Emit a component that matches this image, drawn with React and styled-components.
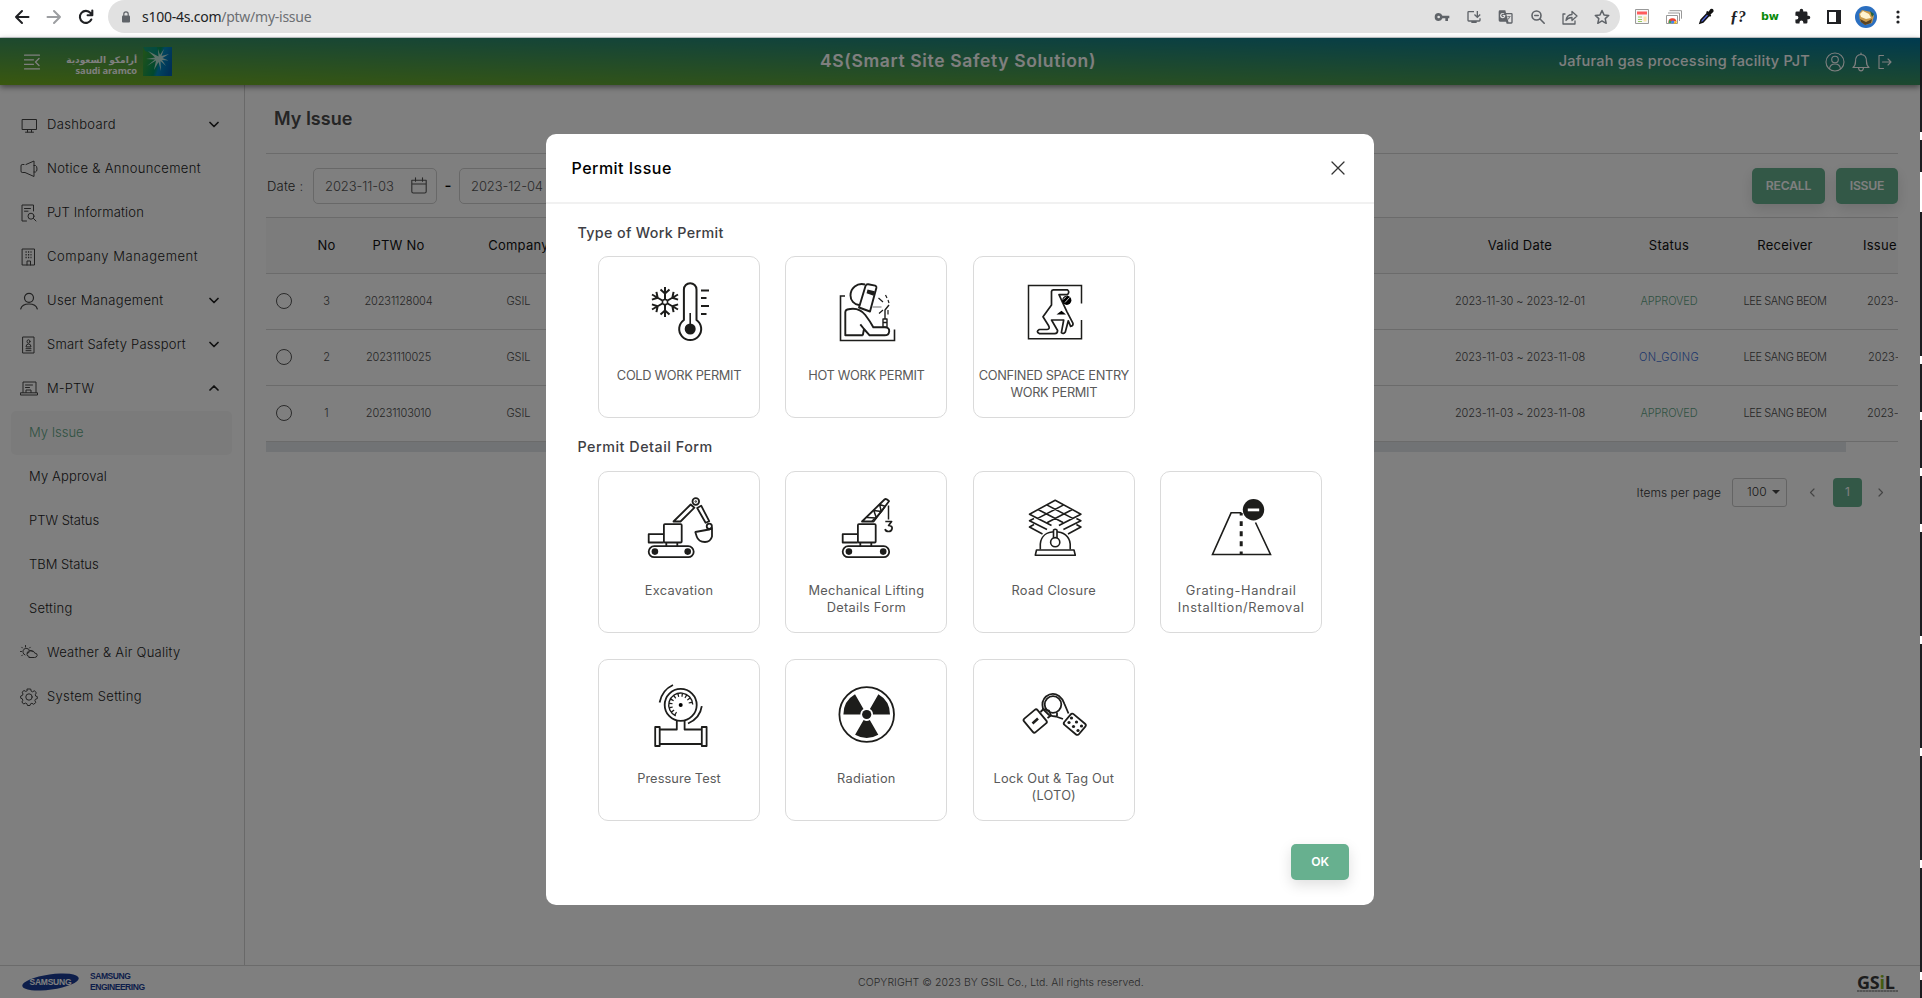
import React from "react";
import styled, { createGlobalStyle } from "styled-components";

const GlobalStyle = createGlobalStyle`
  * { box-sizing: border-box; }
  body { margin: 0; overflow: hidden; background: #fff; font-family: Inter, "Liberation Sans", sans-serif; }
  svg { display: block; flex: none; }
`;

const Screen = styled.div`
  display: flex;
  width: 1922px;
  height: 998px;
  overflow: hidden;
`;
const Browser = styled.div`
  width: 1920px;
  display: flex;
  flex-direction: column;
`;
const Edge = styled.div`
  width: 2px;
  background: linear-gradient(
    #fff 20px, #1c1c20 20px 132px, #fff 132px 140px, #1c1c20 140px 172px, #fff 172px 212px,
    #1c1c20 212px 356px, #fff 356px 364px, #1c1c20 364px 412px, #fff 412px 420px, #1c1c20 420px 468px,
    #fff 468px 476px, #1c1c20 476px 524px, #fff 524px 532px, #1c1c20 532px 636px, #fff 636px 644px,
    #1c1c20 644px 748px, #fff 748px 756px, #1c1c20 756px 860px, #fff 860px 868px, #1c1c20 868px 972px,
    #fff 972px 980px, #1c1c20 980px
  );
`;

/* ---------- browser toolbar ---------- */
const Toolbar = styled.div`
  height: 38px;
  display: flex;
  align-items: flex-start;
  background: #fff;
  border-bottom: 1px solid #c9cdd0;
`;
const NavIcons = styled.div`
  width: 108px;
  height: 33px;
  padding-left: 13px;
  display: flex;
  align-items: center;
  gap: 14px;
`;
const Omnibox = styled.div`
  width: 1512px;
  height: 33px;
  padding: 0 10px 0 14px;
  border-radius: 16.5px;
  background: #e1e1e1;
  display: flex;
  align-items: center;
`;
const Url = styled.div`
  flex: 1;
  margin-left: 12px;
  font: 14px/18px "Noto Sans", sans-serif;
  letter-spacing: -0.25px;
  color: #202124;
  span { color: #6c6f73; }
`;
const OmniIcons = styled.div`
  display: flex;
  gap: 16px;
`;
const Extensions = styled.div`
  height: 33px;
  padding-left: 14px;
  display: flex;
  align-items: center;
  gap: 16px;
`;
const ExtSlot = styled.div`
  width: 16px;
  height: 22px;
  display: flex;
  align-items: center;
  justify-content: center;
  font: ${(p) => p.$font || "inherit"};
  color: ${(p) => p.$color || "#202124"};
`;

/* ---------- app frame ---------- */
const Page = styled.div`
  position: relative;
  height: 960px;
  display: flex;
  flex-direction: column;
  background: #fff;
`;
const Header = styled.header`
  position: relative;
  height: 47px;
  padding: 0 28px 0 24px;
  display: grid;
  grid-template-columns: 1fr auto 1fr;
  align-items: center;
  background: linear-gradient(to top right, #74b01e, #00749e);
  box-shadow: 0 2px 6px rgba(0, 0, 0, 0.5);
  color: #fff;
`;
const HeaderLeft = styled.div`
  display: flex;
  align-items: center;
`;
const Aramco = styled.div`
  display: flex;
  align-items: center;
  gap: 6px;
  margin-left: 26px;
`;
const AramcoName = styled.div`
  width: 71px;
  padding-top: 6px;
  display: flex;
  flex-direction: column;
  align-items: flex-end;
  white-space: nowrap;
`;
const AramcoArabic = styled.span`
  font: bold 9px/11px "DejaVu Sans", sans-serif;
`;
const AramcoLatin = styled.span`
  font: bold 9.3px/9px "Open Sans", sans-serif;
  letter-spacing: -0.1px;
`;
const HeaderTitle = styled.div`
  padding-bottom: 2px;
  font-size: 17.5px;
  line-height: 20px;
  font-weight: 600;
  letter-spacing: 0.65px;
`;
const HeaderRight = styled.div`
  display: flex;
  align-items: center;
  justify-content: flex-end;
`;
const ProjectName = styled.div`
  padding-bottom: 1px;
  font-size: 14.5px;
  line-height: 20px;
  font-weight: 500;
  letter-spacing: 0.24px;
  margin-right: 15px;
  white-space: nowrap;
`;
const HeaderIcons = styled.div`
  display: flex;
  align-items: center;
  gap: 7px;
`;
const Body = styled.div`
  height: 880px;
  display: flex;
`;

/* ---------- sidebar ---------- */
const Sidebar = styled.nav`
  width: 245px;
  padding: 18px 12px 0 11px;
  border-right: 1px solid #d2d2d2;
`;
const MenuItem = styled.div`
  height: 44px;
  padding: ${(p) => (p.$sub ? "0 15px 2px 18px" : "0 13px 3px 9px")};
  display: flex;
  align-items: center;
  border-radius: 5px;
  background: ${(p) => (p.$active ? "#f7f7f7" : "transparent")};
  color: ${(p) => (p.$active ? "#5fa585" : "#1c1c1c")};
  font-size: 13px;
  font-weight: 300;
  letter-spacing: ${(p) => p.$ls || (p.$sub ? "0" : "0.33px")};
  white-space: nowrap;
`;
const MenuIcon = styled.span`
  width: 27px;
  padding-top: 3px;
`;
const MenuLabel = styled.span`
  flex: 1;
`;

/* ---------- main content ---------- */
const Main = styled.main`
  width: 1675px;
  padding: 0 22px 0 21px;
`;
const PageTitle = styled.h1`
  margin: 0;
  height: 68px;
  padding: 0 0 0 8px;
  font-size: 18px;
  line-height: 68px;
  font-weight: 600;
  letter-spacing: 0;
  color: #4b4b4b;
`;
const FilterBar = styled.div`
  height: 65px;
  border-top: 1px solid #d6d6d6;
  border-bottom: 1px solid #d6d6d6;
  display: flex;
  align-items: center;
`;
const FilterLabel = styled.span`
  width: 47px;
  padding-left: 1px;
  font-size: 13px;
  letter-spacing: 0.2px;
  color: #333;
  font-weight: 300;
`;
const DateField = styled.div`
  width: 124px;
  height: 36px;
  padding: 0 9px 0 11px;
  display: flex;
  align-items: center;
  justify-content: space-between;
  border: 1px solid #d0d0d0;
  border-radius: 5px;
  font-size: 13px;
  font-weight: 300;
  letter-spacing: -0.1px;
  color: #555;
`;
const Dash = styled.span`
  width: 22px;
  text-align: center;
  font-size: 15px;
  font-weight: 500;
`;
const Actions = styled.div`
  margin-left: auto;
  display: flex;
  gap: 11px;
`;
const Button = styled.button`
  width: ${(p) => p.$w}px;
  height: 36px;
  padding: 0;
  border: 0;
  border-radius: 5px;
  background: #67b08f;
  color: #fff;
  font: 600 12.2px/36px Inter, sans-serif;
  letter-spacing: -0.2px;
  box-shadow: 0 5px 14px rgba(0, 0, 0, 0.13);
`;
const TableWrap = styled.div`
  overflow: hidden;
`;
const Row = styled.div`
  height: 56px;
  padding-bottom: 1px;
  display: grid;
  grid-template-columns: 35px 51px 93px 147px 844px 168px 130px 102px 62px;
  align-items: center;
  border-bottom: 1px solid #d6d6d6;
  background: ${(p) => (p.$head ? "#f9f9f9" : "#fff")};
  font-size: ${(p) => (p.$head ? "13px" : "11px")};
  font-weight: ${(p) => (p.$head ? 400 : 300)};
  color: ${(p) => (p.$head ? "#111" : "#4c4c4c")};
  letter-spacing: ${(p) => (p.$head ? "0.25px" : "-0.06px")};
`;
const Cell = styled.div`
  text-align: ${(p) => p.$align || "center"};
  padding-left: ${(p) => p.$pad || 0}px;
  color: ${(p) => p.$color || "inherit"};
  letter-spacing: ${(p) => p.$ls || "inherit"};
  white-space: nowrap;
  justify-self: stretch;
`;
const Radio = styled.span`
  display: block;
  width: 16px;
  height: 16px;
  margin: 0 auto;
  border: 1.4px solid #555;
  border-radius: 50%;
`;
const ScrollThumb = styled.div`
  width: 1580px;
  height: 10px;
  background: #e3e6ea;
`;
const Pager = styled.div`
  height: 29px;
  margin-top: 26px;
  padding-right: 14px;
  display: flex;
  align-items: center;
  justify-content: flex-end;
  font-size: 12px;
  font-weight: 300;
  letter-spacing: 0.05px;
  color: #333;
`;
const PageSize = styled.div`
  width: 55px;
  height: 29px;
  margin: 0 22px 0 11px;
  padding: 0 6px 2px 14px;
  display: flex;
  align-items: center;
  justify-content: space-between;
  border: 1px solid #c9c9c9;
  border-radius: 3px;
`;
const CurrentPage = styled.div`
  width: 29px;
  height: 29px;
  margin: 0 16px 0 18px;
  border-radius: 4px;
  background: #67b08f;
  color: #fff;
  font-weight: 400;
  line-height: 27px;
  text-align: center;
`;

/* ---------- footer ---------- */
const Footer = styled.footer`
  height: 33px;
  border-top: 1px solid #d6d6d6;
  padding: 0 22px;
  display: flex;
  align-items: center;
`;
const Samsung = styled.div`
  width: 836px;
  display: flex;
  align-items: center;
  gap: 11px;
`;
const SamsungName = styled.div`
  font: bold 9.9px/10.6px "Liberation Sans", sans-serif;
  letter-spacing: -0.55px;
  transform: scaleX(0.865);
  transform-origin: left center;
  color: #1a3d96;
`;
const Copyright = styled.div`
  font-size: 10.5px;
  font-weight: 300;
  color: #555;
  letter-spacing: 0.05px;
`;
const Gsil = styled.div`
  margin-left: auto;
  width: 41px;
  font: bold 18px/18px "Open Sans", sans-serif;
  letter-spacing: -0.2px;
  color: #3a3a3a;
  white-space: nowrap;
  i { font-style: normal; color: #86b81e; }
  small {
    display: block;
    height: 2px;
    margin-top: -1px;
    background: repeating-linear-gradient(90deg, #aaa 0 2px, #ccc 2px 3px);
  }
`;

/* ---------- dialog ---------- */
const Overlay = styled.div`
  position: absolute;
  inset: 0;
  padding-top: 96px;
  display: flex;
  align-items: flex-start;
  justify-content: center;
  background: rgba(0, 0, 0, 0.5);
`;
const Dialog = styled.section`
  width: 828px;
  height: 771px;
  border-radius: 10px;
  background: #fff;
`;
const DialogHead = styled.div`
  height: 70px;
  padding: 0 29px 0 25.5px;
  display: flex;
  align-items: center;
  justify-content: space-between;
  border-bottom: 2px solid #f1f1f1;
  font-size: 16px;
  font-weight: 500;
  letter-spacing: 0.48px;
  color: #000;
`;
const Section = styled.div`
  padding: 0 0 0 52px;
`;
const SectionTitle = styled.h2`
  margin: 0 0 0 -20.5px;
  height: ${(p) => p.$h}px;
  padding-top: ${(p) => p.$top}px;
  font-size: 14.3px;
  line-height: 20px;
  font-weight: 500;
  letter-spacing: ${(p) => p.$ls};
  color: #3e3e44;
`;
const Cards = styled.div`
  display: grid;
  grid-template-columns: repeat(4, 162px);
  gap: 25.4px;
`;
const Card = styled.div`
  height: 162px;
  padding-top: 19px;
  display: flex;
  flex-direction: column;
  align-items: center;
  border: 1px solid #dadada;
  border-radius: 10px;
  background: #fff;
`;
const CardLabel = styled.div`
  margin: 19px -8px 0;
  font-size: 12.8px;
  line-height: 17px;
  letter-spacing: ${(p) => p.$ls || "0.3px"};
  color: #5a5a5a;
  text-align: center;
  white-space: pre;
`;
const DialogFoot = styled.div`
  padding: 23px 25px 0 0;
  display: flex;
  justify-content: flex-end;
`;

/* ---------- drawings ---------- */
const Line = ({ size = 18, w = size, h = size, sw = 1, children, color = "currentColor" }) => (
  <svg width={w} height={h} viewBox={`0 0 ${w} ${h}`} fill="none" stroke={color} strokeWidth={sw} strokeLinecap="round" strokeLinejoin="round">
    {children}
  </svg>
);
const Chevron = ({ d, w = 10, h = 8, sw = 1.7, color = "#222" }) => (
  <Line w={w} h={h} sw={sw} color={color}><path d={d} /></Line>
);
const Mat = ({ d, color = "#5f6368", size = 16 }) => (
  <svg width={size} height={size} viewBox="0 0 24 24" fill={color}><path d={d} /></svg>
);

const menuIcons = {
  dashboard: <path d="M2.500 3.500h14v10h-14zM7.500 13.500v2.500M11.500 13.500v2.500M5.500 16.200h8" />,
  notice: <path d="M4 4.500H2.200Q1 4.500 1 6v5q0 1.500 1.200 1.500H5l9 4V1L6 4.500M14 5.500h1.500Q17 6 17 9q0 2.500-1.500 3H14" />,
  info: <path d="M6.500 17H2V1h11.500v6M4.500 4.500h6M4.500 7.200h3.500M16 17l-2.500-2.500M14 12.200a3 3 0 1 1-6 0 3 3 0 0 1 6 0z" />,
  company: <><path d="M2.500 1h12v16h-12zM7 17v-4h3.500v4" /><path d="M5.500 4h6M5.500 6.700h6M5.500 9.400h6" strokeDasharray="1.200 1.300" strokeWidth="1.500" strokeLinecap="butt" /></>,
  user: <path d="M13.500 5.800a4.500 4.500 0 1 1-9 0 4.500 4.500 0 0 1 9 0zM.7 17q1.300-5 8.300-5t8.300 5" strokeWidth="1.200" />,
  passport: <path d="M3 1h11v16H3zM10 5.500a1.500 1.700 0 1 1-3 0 1.500 1.700 0 0 1 3 0zM6 10.500q0-2.500 2.500-2.500T11 10.500zM6 12.700h5M6 14.700h5" />,
  ptw: <path d="M3 12.500V2h13v10.500M.8 12.800h16.700v2.200H.8zM5.500 5h7M5.500 7.500h4M6 12.500V10h5v2.500" />,
  weather: <path d="M5.500 3V1.500M1.500 7.500H.5M2.500 4l-.8-.8M9.500 4l.8-.8M2.500 11l-.8.8M5 11a3.500 3.500 0 1 1 4.500-4.800M7 9q2-4.500 5.500-1.500M9 12.500q-2 0-2-2t2-2q1-3 4-1.500 1.500.8 1.500 2 3 .2 2.700 2.500-.5 2-2.700 2H9" />,
  setting: <><path d="M7.300 1h3.400l.5 2.200 1.300.6 2-1.100 1.800 2.200-1 1.800.4 1.400 1.600.5v2l-1.900.7-.5 1.300.9 1.900-2.100 1.800-1.800-1-1.300.5-.6 1.700H7.500l-.6-1.800-1.400-.6-1.900.9-1.700-2 .9-1.700-.5-1.500-1.600-.6V8l1.800-.7.5-1.300-.9-1.800 1.900-1.700 1.700.9 1.200-.5z" /><circle cx="9" cy="9" r="3.200" /></>,
};

const INK = "#1d1d1b";
const Art = ({ children, sw = 1.8 }) => (
  <svg width="72" height="72" viewBox="0 0 72 72" fill="none" stroke={INK} strokeWidth={sw} strokeLinejoin="round">{children}</svg>
);

const SnowArm = ({ a }) => (
  <path transform={`rotate(${a} 22 26)`} d="M22 23V11M17.500 13.500l4.500 4 4.500-4" />
);
const ColdArt = () => (
  <Art sw={2}>
    {[0, 60, 120, 180, 240, 300].map((a) => <SnowArm key={a} a={a} />)}
    <circle cx="22" cy="26" r="2.600" strokeWidth="1.500" />
    <path d="M40.900 44V13.500a6.300 6.300 0 0 1 12.600 0V44a11 11 0 1 1-12.600 0z" />
    <circle cx="47.200" cy="53" r="5.500" fill={INK} stroke="none" />
    <path d="M47.200 37v14" strokeWidth="1.600" />
    <path d="M58 14.500h8M58 22h5.500M58 30h8M58 38h5.500" />
  </Art>
);
const HotArt = () => (
  <Art sw={1.900}>
    <path d="M15 20h-4.500v44.500H64.500V53.500" strokeWidth="1.600" strokeLinejoin="miter" />
    <path d="M35 8.500C27 6.500 20.500 12 20.500 19.500c0 5 3.500 9 8.500 9.500" />
    <path d="M38.200 8.300l7 1.300q1.500.6 1.200 2.200L40 35.500l-11-4L35.500 10q.8-2 2.700-1.700z" />
    <path d="M37.500 13.500l7.300 1.800-1.200 4.500-7-2.500z" fill={INK} stroke="none" />
    <path d="M32.800 59.300H15.300V36q0-1.800 2-2.500 11.500-3 18 5.500 5 6.500 8 12.300H55q4.500.2 4.200 4-.5 4-4.500 4H39.600L34 53l-3.700-4.700M34 53l-1.200 6.300" />
    <path d="M53 43h4v8.300h-4zM53 46.500h4M55 43v-9l4-5" strokeWidth="1.400" />
    <path d="M48.500 22l4.500 4M55.500 19l1.500 3M58 24l1 3M49 37.500l4-3.500M58 34v4.500" strokeWidth="1.200" />
    <path d="M42.500 31h9" stroke="#888" strokeWidth="1.200" />
  </Art>
);
const ConfinedArt = () => (
  <Art sw={1.700}>
    <path d="M63.500 27.500V9.500H10.500v53.200h53V44" strokeWidth="1.500" strokeLinejoin="miter" />
    <path d="M49.500 18.600H41l4 8.700 4 8.500 6 11.500q.3 2.700-2.400 3l-2.300-5.500-3 11.200q-1.800 2.500-3.900.7L45.700 44H33.500l6.100 10.500q0 3-3 3.200H21.600q-4.300-2-.3-4.200H29q3.500-.5 1.500-4L25 40.700 33.500 29V15.500q.3-1.700 2-1.700h14q2.500 2.200 0 4.800z" />
    <circle cx="48.800" cy="24.300" r="4.600" fill="#000" stroke="none" />
    <path d="M47 26.500l4.500-5M45.200 23.500l3-3" stroke="#fff" strokeWidth=".8" />
    <path d="M38.500 38.500l5-3.800 4.500 3.800z" fill="#000" stroke="none" />
  </Art>
);
const Vehicle = ({ x = 0, w = 45 }) => (
  <g transform={`translate(${x} 0)`}>
    <rect x="5.700" y="55.200" width={w} height="11" rx="5.500" />
    <circle cx="11.900" cy="60.600" r="3.300" fill={INK} stroke="none" />
    <circle cx={w - 0.3} cy="60.600" r="3.300" fill={INK} stroke="none" />
    <path d="M23.300 51.500v3.500M34.300 51.500v3.500M20.700 43.200h-15v8.300h15" />
    <rect x="20.900" y="33.200" width="17.800" height="18.300" rx="1" />
  </g>
);
const ExcavationArt = () => (
  <Art>
    <Vehicle />
    <path d="M30.500 30.500L47.700 13.500l3.700 3.200L37.500 30.500z" />
    <circle cx="52.800" cy="10.500" r="3.300" /><circle cx="52.800" cy="10.500" r=".8" strokeWidth="1" />
    <path d="M54.200 17l4-2.300 8 15.500-3.600 1.600z" />
    <circle cx="66.300" cy="35.200" r="2.600" />
    <path d="M52.300 41l11-2q3 0 5.700-2v8.500q-1.500 5.500-7 5.500-6.500 0-8.300-5.500z" />
  </Art>
);
const LiftingArt = () => (
  <Art>
    <Vehicle x={7} w={46.5} />
    <path d="M32 30.500L54.500 8.500q1.800-1.500 4.500 1.700L43.600 30.500z" />
    <path d="M36.900 26.500l9.500.5-2.600-7.500 7.500 1-1.700-7 5.400 1.700M42 30l4-3.500 5.500-6 3.500-5" strokeWidth="1.500" />
    <path d="M58.500 14.500v14" strokeWidth="1.500" />
    <path d="M55.300 30.500h6.300l-3 4q4 .5 3.500 3-.5 3-3.500 3t-3.500-2.500" strokeWidth="1.700" />
  </Art>
);
const RoadArt = () => (
  <Art sw={1.600}>
    <path d="M33.500 34.500L11.500 23.200 37.200 9.200l25.700 14-22 11.300M20 18.500l25 13M28.700 13.900l26 13.500M54.400 18.500l-25 13M45.700 13.900l-26 13.500" />
    <path d="M16 27.500l-4.500 2.200L29 38.500M58.400 27.500l4.500 2.200-17.500 8.800M16 33.500l-4.500 2.500L24.500 43M58.400 33.500l4.500 2.500L50 43" />
    <path d="M22.300 58.500V53C23 45 29 40.800 37.200 40.800S51.500 45 52.200 53v5.500" fill="#fff" />
    <path d="M18.500 59h37.500l1.300 5.200H17.300z" />
    <path d="M35.500 47v-8q1.700-1.500 3.500 0v8" fill="#fff" />
    <circle cx="37.200" cy="51.200" r="4.600" fill="#fff" />
  </Art>
);
const GratingArt = () => (
  <Art>
    <path d="M36.500 21.800H26.100L7.500 63.500h58L50.500 31.500" strokeWidth="1.600" strokeLinejoin="miter" />
    <path d="M36.200 22v2.500M36.200 30.200v4.800M36.200 40.200v5M36.200 50.200v5M36.200 60.500v3" strokeWidth="3" />
    <circle cx="48.500" cy="18.800" r="10.700" fill={INK} stroke="none" />
    <path d="M42.800 18.900h11.400" stroke="#fff" strokeWidth="2.800" />
  </Art>
);
const PressureArt = () => (
  <Art sw={1.800}>
    <circle cx="37.700" cy="25.900" r="16" />
    <path d="M32.700 36.900A12 12 0 1 1 49.700 25.500" strokeWidth="1.400" />
    <path d="M33.200 34.900A10 10 0 1 1 47.700 25.500" strokeWidth="3.500" strokeDasharray="1.300 2.600" />
    <circle cx="37.700" cy="25.900" r="2" fill="#000" stroke="none" />
    <path d="M30 6Q19 11 16.600 23.500M58.800 27.200Q57 39.500 45 44.500" />
    <path d="M33.800 42v8.500H17M41.600 42v8.500h17M17 65h41.800M12.200 48h4.500v19h-4.500zM58.800 48h4.800v19h-4.800z" />
  </Art>
);
const RadiationArt = () => (
  <Art>
    <circle cx="36.700" cy="35.500" r="27.300" />
    <circle cx="36.700" cy="35.500" r="4.600" fill={INK} stroke="none" />
    {[0, 120, 240].map((a) => (
      <path key={a} transform={`rotate(${a} 36.700 35.500)`} d="M33.600 41l-8.500 14.700a23.300 23.300 0 0 0 23.200 0L39.800 41a6.300 6.300 0 0 1-6.200 0z" fill={INK} stroke="none" />
    ))}
  </Art>
);
const LotoArt = () => (
  <Art sw={1.800}>
    <circle cx="35" cy="25.500" r="8.300" />
    <path d="M25 30q-2-8 3-12.500 6.500-5 13-.5 4 3 5.500 8l4 9.500M25 30l6 6q4 1.500 7 1.500l7 2.500M39 33.500V37" />
    <path d="M22.500 33l3-3 5.500 1.500 2 5-3.500 2.500" />
    <rect x="-8.800" y="-8.800" width="17.600" height="17.600" rx="2" transform="translate(17.200 42) rotate(-40)" fill="#fff" />
    <path d="M14.500 44.500l5.500-5" strokeWidth="2.600" />
    <rect x="-9.500" y="-7" width="19" height="14" rx="2" transform="translate(56.800 45.300) rotate(40)" fill="#fff" />
    {[[53.5, 39], [51, 43.5], [58.5, 43], [55.5, 47.5], [63.5, 47], [60, 51.5]].map(([x, y]) => <circle key={`${x}-${y}`} cx={x} cy={y} r="1.600" fill={INK} stroke="none" />)}
  </Art>
);

/* ---------- data ---------- */
const menu = [
  { label: "Dashboard", icon: "dashboard", arrow: "down" },
  { label: "Notice & Announcement", icon: "notice" },
  { label: "PJT Information", icon: "info", ls: "0.15px" },
  { label: "Company Management", icon: "company", ls: "0.55px" },
  { label: "User Management", icon: "user", arrow: "down" },
  { label: "Smart Safety Passport", icon: "passport", arrow: "down", ls: "0.22px" },
  { label: "M-PTW", icon: "ptw", arrow: "up", ls: "0.1px" },
  { label: "My Issue", sub: true, active: true },
  { label: "My Approval", sub: true, ls: "0.15px" },
  { label: "PTW Status", sub: true },
  { label: "TBM Status", sub: true },
  { label: "Setting", sub: true, ls: "0.25px" },
  { label: "Weather & Air Quality", icon: "weather", ls: "0.25px" },
  { label: "System Setting", icon: "setting" },
];
const rows = [
  { no: 3, ptw: "20231128004", valid: "2023-11-30 ~ 2023-12-01", status: "APPROVED" },
  { no: 2, ptw: "20231110025", valid: "2023-11-03 ~ 2023-11-08", status: "ON_GOING" },
  { no: 1, ptw: "20231103010", valid: "2023-11-03 ~ 2023-11-08", status: "APPROVED" },
];
const permits = [
  ["COLD WORK PERMIT", ColdArt],
  ["HOT WORK PERMIT", HotArt],
  ["CONFINED SPACE ENTRY\nWORK PERMIT", ConfinedArt],
];
const forms = [
  ["Excavation", ExcavationArt],
  ["Mechanical Lifting\nDetails Form", LiftingArt],
  ["Road Closure", RoadArt],
  ["Grating-Handrail\nInstalltion/Removal", GratingArt, "0.65px"],
  ["Pressure Test", PressureArt, "0.08px"],
  ["Radiation", RadiationArt],
  ["Lock Out & Tag Out\n(LOTO)", LotoArt, "0.18px"],
];

const CardGrid = ({ items, ls }) => (
  <Cards>
    {items.map(([label, Drawing, own]) => (
      <Card key={label}>
        <Drawing />
        <CardLabel $ls={own || ls}>{label}</CardLabel>
      </Card>
    ))}
  </Cards>
);

const Calendar = () => (
  <Line w={16} h={17} sw={1.1} color="#555"><path d="M.8 3.200h14.400v11.300q0 1.500-1.500 1.500H2.300Q.8 16 .8 14.500zM.8 7h14.400M4.500.8v3.500M11.500.8v3.500" /></Line>
);

export default function App() {
  return (
    <Screen>
      <GlobalStyle />
      <Browser>
        <Toolbar>
          <NavIcons>
            <Line w={18} h={18} sw={2} color="#202124"><path d="M15.500 9H3M9 3L3 9l6 6" /></Line>
            <Line w={18} h={18} sw={2} color="#9c9ea1"><path d="M2.500 9H15M9 3l6 6-6 6" /></Line>
            <Line w={18} h={18} sw={2.1} color="#202124"><path d="M14.300 11.500A6 6 0 1 1 13.500 5L15 6.500M15.300 2.500v4.700h-4.700" /></Line>
          </NavIcons>
          <Omnibox>
            <svg width="8" height="12" viewBox="0 0 8 12"><rect y="4.500" width="8" height="7" rx="1" fill="#5f6368" /><path d="M1.800 5V3a2.200 2.200 0 0 1 4.400 0v2" fill="none" stroke="#5f6368" strokeWidth="1.200" /></svg>
            <Url>s100-4s.com<span>/ptw/my-issue</span></Url>
            <OmniIcons>
              <Mat d="M12.650 10A6 6 0 0 0 7 6a6 6 0 0 0 0 12 6 6 0 0 0 5.650-4H17v4h4v-4h2v-4H12.650zM7 14a2 2 0 1 1 0-4 2 2 0 0 1 0 4z" />
              <Mat d="M20 17H4V5h8V3H4a2 2 0 0 0-2 2v12a2 2 0 0 0 2 2h4v2h8v-2h4a2 2 0 0 0 2-2v-3h-2v3zM17 14l5-5-1.400-1.400L18 10.200V3h-2v7.200l-2.600-2.600L12 9l5 5z" />
              <Mat d="M3 2h8l1 4h8a2 2 0 0 1 2 2v12a2 2 0 0 1-2 2h-7l-1-3H3a2 2 0 0 1-2-2V4a2 2 0 0 1 2-2zm4 12c2.500 0 4-1.800 4-4.200V9H7v1.500h2.200A2.200 2.200 0 1 1 8.600 8l1.100-1A4 4 0 1 0 7 14zm5.500-6l3.300 12H20V8h-7.500zM14 11h5v1h-1l-2 4-.8-1.500 1.300-2.500H14z" />
              <Line w={16} h={16} sw={1.6} color="#5f6368"><path d="M11 6.500a4.500 4.500 0 1 1-9 0 4.500 4.500 0 0 1 9 0zM9.800 9.800l4.400 4.400M4.800 6.500h3.400" /></Line>
              <Line w={16} h={16} sw={1.3} color="#5f6368"><path d="M3 5H1v10h12v-3M4 11.500Q4.500 6 10 5.500V2.500L15 7l-5 4.500v-3Q6 8.500 4 11.500z" /></Line>
              <Line w={16} h={16} sw={1.5} color="#5f6368"><path d="M8 1.500l2 4.400 4.700.5-3.500 3.200 1 4.700L8 11.900l-4.200 2.400 1-4.700L1.300 6.400 6 5.900z" /></Line>
            </OmniIcons>
          </Omnibox>
          <Extensions>
            <ExtSlot><svg width="14" height="15" viewBox="0 0 14 15"><path d="M.5.500h13v14H.5z" fill="#f7f7f7" stroke="#999" /><path d="M2 2.500h10v3H2z" fill="#ff5d5d" /><path d="M3 8h4M3 10.500h4M3 12.500h4" stroke="#9c6" /><path d="M8.500 7.500h3v5h-3z" fill="#ffe2a8" /></svg></ExtSlot>
            <ExtSlot><svg width="16" height="14" viewBox="0 0 16 14"><path d="M3.500.7h12v8M2 3h11.500v8" fill="none" stroke="#999" /><path d="M.5 5.500h11v8H.5z" fill="#fff" stroke="#999" /><path d="M2.500 13a4 4 0 0 1 8-1.500H7z" fill="#ea4335" /><path d="M2.500 13l1-3.500L6 13z" fill="#34a853" /><path d="M10.500 10.500V13.500H7z" fill="#fbbc04" /><circle cx="6.700" cy="12" r="1.600" fill="#4285f4" /></svg></ExtSlot>
            <ExtSlot><svg width="16" height="17" viewBox="0 0 16 17"><path d="M2 15l1-3 6-6.500 2 2L5 14z" fill="#4f63d8" stroke="#111" strokeWidth="1.500" /><path d="M8 4l1.500-1 1 .8L12.500 1q2-1 3 1 .5 1.500-.8 2.500L12.500 6.500l.7 1-1.200 1.500z" fill="#111" /></svg></ExtSlot>
            <ExtSlot $font='italic bold 16px/18px "Liberation Serif", serif'>ƒ?</ExtSlot>
            <ExtSlot $font='bold 11px/16px "DejaVu Sans", sans-serif' $color="#0a8a0a">bw</ExtSlot>
            <ExtSlot><Mat size={17} color="#202124" d="M20.500 11H19V7a2 2 0 0 0-2-2h-4V3.500a2.500 2.500 0 0 0-5 0V5H4a2 2 0 0 0-2 2v3.800h1.500a2.700 2.700 0 0 1 0 5.400H2V20a2 2 0 0 0 2 2h3.800v-1.500a2.700 2.700 0 0 1 5.400 0V22H17a2 2 0 0 0 2-2v-4h1.500a2.500 2.500 0 0 0 0-5z" /></ExtSlot>
            <ExtSlot><svg width="14" height="14" viewBox="0 0 14 14"><path d="M1 1h12v12H1z" fill="none" stroke="#202124" strokeWidth="2" /><path d="M9 1h4v12H9z" fill="#202124" /></svg></ExtSlot>
            <ExtSlot><svg width="22" height="22" viewBox="0 0 22 22"><circle cx="11" cy="11" r="11" fill="#2b6fc0" /><path d="M4 8l3-4 9 2 3 4-2 7-7 2-5-4z" fill="#c99a4c" /><path d="M5 8l3-3 6 3 2 4-5 1-5-2z" fill="#fff3d0" /><path d="M5 13l6 3 6-3-1 4-6 2-4-3z" fill="#5a4322" /><path d="M15 5l4 3-2 3z" fill="#25613c" /></svg></ExtSlot>
            <ExtSlot><svg width="4" height="14" viewBox="0 0 4 14" fill="#202124"><circle cx="2" cy="2" r="1.600" /><circle cx="2" cy="7" r="1.600" /><circle cx="2" cy="12" r="1.600" /></svg></ExtSlot>
          </Extensions>
        </Toolbar>

        <Page>
          <Header>
            <HeaderLeft>
              <Line w={16} h={16} sw={1.3}><path d="M.5 1.200h15M.5 5.800h9M.5 10.300h9M.5 14.900h15M15 4.500L11.500 8l3.500 3.500" /></Line>
              <Aramco>
                <AramcoName>
                  <AramcoArabic>أرامكو السعودية</AramcoArabic>
                  <AramcoLatin>saudi aramco</AramcoLatin>
                </AramcoName>
                <svg width="29" height="29" viewBox="0 0 29 29">
                  <defs>
                    <linearGradient id="aramco" x1="0" y1="0.300" x2="1" y2="0.600"><stop offset="0" stopColor="#3fa535" /><stop offset=".5" stopColor="#00915f" /><stop offset=".62" stopColor="#008bc0" /><stop offset="1" stopColor="#0060ae" /></linearGradient>
                  </defs>
                  <path d="M0 0h29v29H0z" fill="url(#aramco)" />
                  <path d="M0 0h14l2 9-14-5z" fill="#0095a0" opacity=".6" />
                  <path d="M15.500 9.500L15 2l2 6L21 2l-2.500 7L26 7l-6.500 4 6 2.500-6.500-.5 4 6-5.500-5L18 24l-2.500-9L11 23l2-9.500L4 19l8-6.500L3 12l9-1.500L5 4z" fill="#cfeee4" opacity=".9" />
                </svg>
              </Aramco>
            </HeaderLeft>
            <HeaderTitle>4S(Smart Site Safety Solution)</HeaderTitle>
            <HeaderRight>
              <ProjectName>Jafurah gas processing facility PJT</ProjectName>
              <HeaderIcons>
                <Line w={20} h={20} sw={1.1}><circle cx="10" cy="10" r="9" /><circle cx="10" cy="7.500" r="3.300" /><path d="M4.500 17Q5 12 10 12t5.500 5" /></Line>
                <Line w={18} h={20} sw={1.2}><path d="M1 15.500q2.500-2 2.500-6 0-7 5.500-7t5.500 7q0 4 2.500 6zM9 2.500V1M6.500 15.800q.5 3 2.500 3t2.500-3" /></Line>
                <Line w={15} h={16} sw={1.1}><path d="M6.500 1.500H2v13h4.500M5.500 8h8.500M11 5l3 3-3 3" /></Line>
              </HeaderIcons>
            </HeaderRight>
          </Header>

          <Body>
            <Sidebar>
              {menu.map((m) => (
                <MenuItem key={m.label} $sub={m.sub} $active={m.active} $ls={m.ls}>
                  {m.icon && <MenuIcon><Line color="#444">{menuIcons[m.icon]}</Line></MenuIcon>}
                  <MenuLabel>{m.label}</MenuLabel>
                  {m.arrow && <Chevron d={m.arrow === "down" ? "M1 2.500l4 4 4-4" : "M1 6l4-4 4 4"} />}
                </MenuItem>
              ))}
            </Sidebar>
            <Main>
              <PageTitle>My Issue</PageTitle>
              <FilterBar>
                <FilterLabel>Date :</FilterLabel>
                <DateField>2023-11-03<Calendar /></DateField>
                <Dash>-</Dash>
                <DateField>2023-12-04<Calendar /></DateField>
                <Actions>
                  <Button $w={73}>RECALL</Button>
                  <Button $w={62}>ISSUE</Button>
                </Actions>
              </FilterBar>
              <TableWrap>
                <Row $head>
                  <Cell />
                  <Cell>No</Cell>
                  <Cell>PTW No</Cell>
                  <Cell>Company</Cell>
                  <Cell />
                  <Cell>Valid Date</Cell>
                  <Cell>Status</Cell>
                  <Cell>Receiver</Cell>
                  <Cell $align="left" $pad={27}>Issue</Cell>
                </Row>
                {rows.map((r) => (
                  <Row key={r.no}>
                    <Cell><Radio /></Cell>
                    <Cell>{r.no}</Cell>
                    <Cell $ls="-0.15px">{r.ptw}</Cell>
                    <Cell>GSIL</Cell>
                    <Cell />
                    <Cell>{r.valid}</Cell>
                    <Cell $color={r.status === "APPROVED" ? "#5fa585" : "#3d6fd8"} $ls={r.status === "APPROVED" ? "-0.15px" : "0.35px"}>{r.status}</Cell>
                    <Cell $ls="-0.4px">LEE SANG BEOM</Cell>
                    <Cell $align="left" $pad={r.no === 2 ? 32 : 31}>2023-</Cell>
                  </Row>
                ))}
                <ScrollThumb />
              </TableWrap>
              <Pager>
                Items per page
                <PageSize>100<svg width="8" height="4" viewBox="0 0 8 4"><path d="M0 0h8L4 4z" fill="#444" /></svg></PageSize>
                <Chevron d="M5 1L1.500 4.500 5 8" w={6} h={9} sw={1.2} color="#888" />
                <CurrentPage>1</CurrentPage>
                <Chevron d="M1 1l3.500 3.500L1 8" w={6} h={9} sw={1.2} color="#888" />
              </Pager>
            </Main>
          </Body>

          <Footer>
            <Samsung>
              <svg width="57" height="20" viewBox="0 0 57 20">
                <ellipse cx="28.500" cy="10" rx="28.500" ry="7.600" transform="rotate(-8 28.500 10)" fill="#1a3d96" />
                <text x="7.500" y="13" fontFamily="Liberation Sans" fontWeight="bold" fontSize="8.500" fill="#fff" textLength="42">SAMSUNG</text>
              </svg>
              <SamsungName>SAMSUNG<br />ENGINEERING</SamsungName>
            </Samsung>
            <Copyright>COPYRIGHT © 2023 BY GSIL Co., Ltd. All rights reserved.</Copyright>
            <Gsil>GS<i>i</i>L<small /></Gsil>
          </Footer>

          <Overlay>
            <Dialog>
              <DialogHead>
                Permit Issue
                <Line w={14} h={14} sw={1.3} color="#333"><path d="M1 1l12 12M13 1L1 13" /></Line>
              </DialogHead>
              <Section>
                <SectionTitle $h={51.7} $top={19} $ls="0.34px">Type of Work Permit</SectionTitle>
                <CardGrid items={permits} ls="-0.32px" />
                <SectionTitle $h={53.5} $top={19.8} $ls="0.52px">Permit Detail Form</SectionTitle>
                <CardGrid items={forms} />
              </Section>
              <DialogFoot><Button $w={58}>OK</Button></DialogFoot>
            </Dialog>
          </Overlay>
        </Page>
      </Browser>
      <Edge />
    </Screen>
  );
}
